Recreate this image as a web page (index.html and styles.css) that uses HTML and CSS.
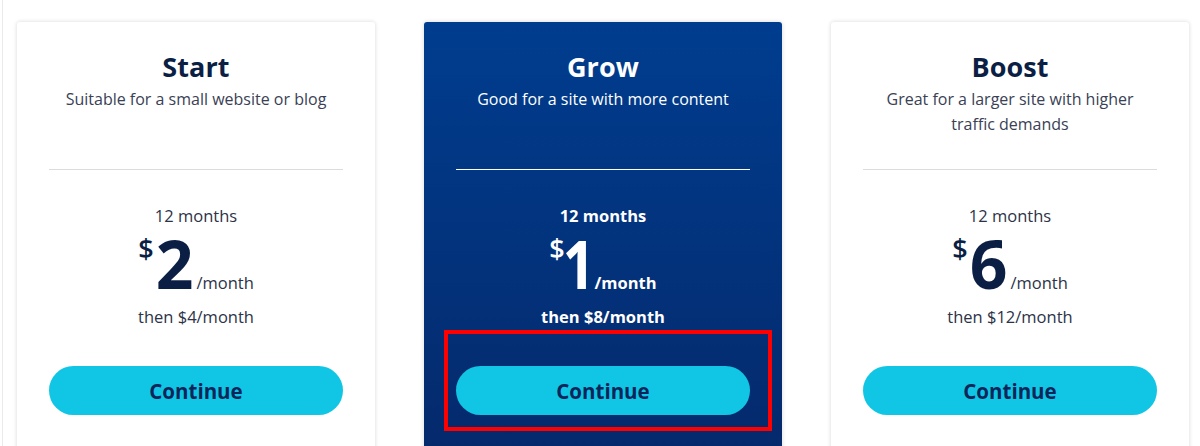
FILE: index.html
```html
<!DOCTYPE html>
<html lang="en">
<head>
<meta charset="utf-8">
<title>Plans</title>
<link rel="stylesheet" href="styles.css">
</head>
<body>
<div class="page">
  <div class="plans">
    <div class="card">
      <h2 class="title">Start</h2>
      <div class="desc">Suitable for a small website or blog</div>
      <hr class="divider">
      <div class="term">12 months</div>
      <div class="price"><span class="cur">$</span><span class="amt">2</span><span class="per">/month</span></div>
      <div class="then">then $4/month</div>
      <button class="cta">Continue</button>
    </div>
    <div class="card card-featured">
      <h2 class="title">Grow</h2>
      <div class="desc">Good for a site with more content</div>
      <hr class="divider">
      <div class="term">12 months</div>
      <div class="price"><span class="cur">$</span><span class="amt amt-narrow">1</span><span class="per">/month</span></div>
      <div class="then">then $8/month</div>
      <button class="cta">Continue</button>
      <div class="highlight"></div>
    </div>
    <div class="card">
      <h2 class="title">Boost</h2>
      <div class="desc">Great for a larger site with higher traffic demands</div>
      <hr class="divider">
      <div class="term">12 months</div>
      <div class="price"><span class="cur">$</span><span class="amt">6</span><span class="per">/month</span></div>
      <div class="then">then $12/month</div>
      <button class="cta">Continue</button>
    </div>
  </div>
</div>
</body>
</html>
```

FILE: styles.css
```css
html, body {
  margin: 0;
  padding: 0;
  background: #ffffff;
  height: 446px;
  overflow: hidden;
}
body {
  font-family: "Open Sans", "Noto Sans", sans-serif;
  color: #0b1f45;
  padding-left: 2px;
}
.page {
  border-left: 1px solid #ebebeb;
  height: 446px;
  box-sizing: border-box;
  padding: 22px 0 0 14px;
}
.plans {
  display: flex;
  gap: 49px;
}
.card {
  position: relative;
  width: 358px;
  height: 440px;
  box-sizing: border-box;
  padding: 29px 32px 0;
  background: #ffffff;
  border-radius: 3px;
  box-shadow: 0 0 4px rgba(0, 0, 0, 0.16);
  text-align: center;
  display: flex;
  flex-direction: column;
}
.title {
  margin: 0;
  font-size: 27px;
  line-height: 32px;
  font-weight: 700;
  color: #0b1f45;
  letter-spacing: 0.1px;
}
.desc {
  margin-top: 4px;
  height: 50px;
  font-size: 16px;
  line-height: 25px;
  color: #3a4155;
  padding: 0 12px;
}
.divider {
  margin: 32px 0 0;
  border: 0;
  height: 1px;
  background: #dcdcdc;
}
.term {
  margin-top: 35px;
  font-size: 16.5px;
  line-height: 22px;
  color: #2c3347;
}
.price {
  display: flex;
  justify-content: center;
  align-items: baseline;
  height: 52px;
  margin-top: 10px;
}
.cur {
  align-self: flex-start;
  font-size: 27px;
  line-height: 24px;
  font-weight: 600;
  margin-right: 2px;
}
.amt {
  font-size: 66px;
  line-height: 52px;
  font-weight: 700;
  letter-spacing: -1px;
}
.amt-narrow {
  transform: scaleX(0.85);
  margin: 0 -6px 0 -7px;
}
.per {
  font-size: 16.5px;
  margin-left: 4px;
  color: #2c3347;
}
.then {
  margin-top: 17px;
  font-size: 16.5px;
  line-height: 22px;
  color: #2c3347;
}
.cta {
  margin-top: 38px;
  height: 49px;
  width: 100%;
  border: 0;
  border-radius: 25px;
  background: #11c6e5;
  color: #0a2559;
  font-family: "Open Sans", "Noto Sans", sans-serif;
  font-size: 20.5px;
  font-weight: 700;
  cursor: pointer;
}
.card-featured {
  background: linear-gradient(180deg, #003d8f 0%, #05296b 100%);
  color: #ffffff;
}
.card-featured .title,
.card-featured .desc,
.card-featured .term,
.card-featured .then,
.card-featured .per {
  color: #ffffff;
}
.card-featured .term,
.card-featured .then,
.card-featured .per {
  font-weight: 700;
}
.card-featured .divider {
  background: #ffffff;
}
.highlight {
  position: absolute;
  left: 20px;
  top: 308px;
  width: 328px;
  height: 101px;
  box-sizing: border-box;
  border: 4px solid #ff0000;
  pointer-events: none;
}
```
